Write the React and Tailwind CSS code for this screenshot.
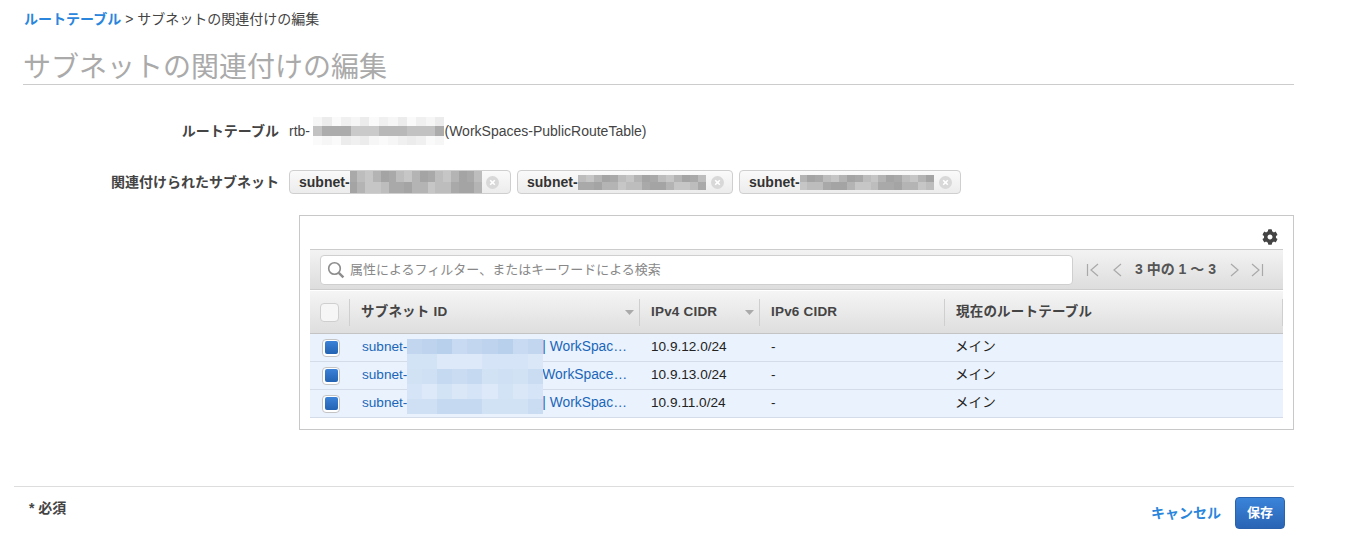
import { FaCog } from 'react-icons/fa';

const SANS = 'font-["Liberation_Sans","Noto_Sans_CJK_JP",sans-serif]';

const GRAY_DARK = ['#a9a9a9', '#b4b4b4', '#bdbdbd', '#a4a4a4', '#c6c6c6'];
const GRAY_PALE = ['#f6f6f6', '#f0f0f0', '#fafafa', '#ececec'];
const BLUE_DARK = ['#bdd3ee', '#c2d6f0', '#c7daf1', '#b9d0ec'];
const BLUE_MID = ['#c9dcf2', '#cfe0f4', '#c5d9f1', '#d2e2f5'];
const BLUE_PALE = ['#d5e4f6', '#d9e7f7', '#d3e3f6', '#dde9f8'];

// mosaic standing in for the blurred-out ids
const Pixels = ({ cols, cellW, cellH, bands, seed = 1 }) => {
  const cells = [];
  bands.forEach((palette, r) => {
    for (let c = 0; c < cols; c++) {
      const n = (c * 7 + r * 13 + seed * 5 + ((c * r + seed) % 3)) % palette.length;
      cells.push(
        <span
          key={`${r}-${c}`}
          className="block"
          style={{ width: cellW, height: cellH, background: palette[n] }}
        />
      );
    }
  });
  return (
    <span className="inline-grid shrink-0" style={{ gridTemplateColumns: `repeat(${cols}, ${cellW}px)` }}>
      {cells}
    </span>
  );
};

const ChipX = () => (
  <svg width="13" height="13" viewBox="0 0 13 13" className="shrink-0">
    <circle cx="6.5" cy="6.5" r="6.5" fill="#d8d8d8" />
    <path d="M4.2 4.2l4.6 4.6M8.8 4.2l-4.6 4.6" stroke="#fff" strokeWidth="1.6" />
  </svg>
);

const Chip = ({ width, seed, bands, cellW, cellH, blurCols, gap }) => (
  <div
    className="flex h-[24px] items-center rounded-[4px] border border-[#cfcfcf] bg-gradient-to-b from-[#fafafa] to-[#ececec] pl-[9px]"
    style={{ width }}
  >
    <span className="text-[14px] font-bold text-[#333]">subnet-</span>
    <span className="-my-2 flex items-center">
      <Pixels cols={blurCols} cellW={cellW} cellH={cellH} bands={bands} seed={seed} />
    </span>
    <span style={{ marginLeft: gap }}>
      <ChipX />
    </span>
  </div>
);

const PageIcon = ({ d }) => (
  <svg width="14" height="16" viewBox="0 0 14 16" fill="none" stroke="#a9a9a9" strokeWidth="1.2">
    <path d={d} />
  </svg>
);

const SortArrow = () => (
  <svg width="9" height="5" viewBox="0 0 9 5" className="shrink-0">
    <path d="M0 0h9L4.5 5z" fill="#aaa" />
  </svg>
);

const HeadCell = ({ children, sort, last }) => (
  <div className="flex h-[27px] items-center border-l border-[#cfcfcf] pr-[5px] pl-[11px]">
    <span className="text-[13.5px] font-bold tracking-[0.2px] text-[#444]">{children}</span>
    {sort && (
      <span className="ml-auto">
        <SortArrow />
      </span>
    )}
    {last && <span className="ml-auto h-[27px] -mr-[5px] border-r border-[#cfcfcf]" />}
  </div>
);

const COLS = 'grid grid-cols-[39px_290px_120px_185px_1fr]';

const rows = [
  { tail: '| WorkSpac…', cidr: '10.9.12.0/24' },
  { tail: 'WorkSpace…', cidr: '10.9.13.0/24' },
  { tail: '| WorkSpac…', cidr: '10.9.11.0/24' },
];

const Row = ({ tail, cidr }) => (
  <div className={`${COLS} h-[28px] items-center border-b border-[#d3dce8] bg-[#eaf2fd] text-[13.6px] text-[#222]`}>
    <div className="pl-[12px]">
      <div className="flex h-[18px] w-[18px] items-center justify-center rounded-[4px] border border-[#c4c4c4] bg-white">
        <div className="h-[13px] w-[13px] rounded-[2px] bg-gradient-to-b from-[#3b82d8] to-[#2463b3]" />
      </div>
    </div>
    <div className="flex pl-[13px] text-[#1a66b8]">
      <span>subnet-</span>
      <span className="w-[135px] shrink-0" />
      <span className="whitespace-nowrap text-[13.8px]">{tail}</span>
    </div>
    <div className="pl-[12px]">{cidr}</div>
    <div className="pl-[12px]">-</div>
    <div className="pl-[11px]">メイン</div>
  </div>
);

export default function App() {
  return (
    <div className={`${SANS} h-[548px] w-[1368px] overflow-hidden bg-white text-[#444]`}>
      {/* Breadcrumb + title */}
      <div className="ml-[23px] w-[1271px]">
        <div className="flex h-[39px] items-center pl-px text-[14px] text-[#444]">
          <span className="font-bold text-[#2a86dc]">ルートテーブル</span>
          <span className="ml-[4px]">&gt; サブネットの関連付けの編集</span>
        </div>
        <h1 className="h-[46px] border-b border-[#cccccc] text-[28px] leading-[58px] font-normal text-[#aaaaaa]">
          サブネットの関連付けの編集
        </h1>
      </div>

      {/* Form rows */}
      <div className="mt-[32px] flex h-[28px] items-center">
        <div className="w-[279px] text-right text-[14px] font-bold text-[#444]">ルートテーブル</div>
        <div className="ml-[10px] flex items-center text-[14px] text-[#444]">
          <span>rtb-</span>
          <span className="ml-[3px] flex">
            <Pixels
              cols={14}
              cellW={9.4}
              cellH={9.4}
              seed={2}
              bands={[GRAY_PALE, ['#b8b8b8', '#c2c2c2', '#acacac', '#cacaca'], GRAY_PALE]}
            />
          </span>
          <span>(WorkSpaces-PublicRouteTable)</span>
        </div>
      </div>

      <div className="mt-[25px] flex items-center">
        <div className="w-[279px] text-right text-[14px] font-bold text-[#444]">関連付けられたサブネット</div>
        <div className="ml-[10px] flex gap-[6px]">
          <Chip width={222} seed={3} blurCols={17} cellW={7.8} cellH={11} gap={4} bands={[GRAY_DARK, GRAY_DARK]} />
          <Chip width={216} seed={5} blurCols={16} cellW={8} cellH={7.5} gap={5} bands={[GRAY_DARK, GRAY_DARK]} />
          <Chip width={222} seed={7} blurCols={17} cellW={7.9} cellH={7.5} gap={5} bands={[GRAY_DARK, GRAY_DARK]} />
        </div>
      </div>

      {/* Subnet table */}
      <div className="mt-[21px] ml-[299px] h-[215px] w-[995px] border border-[#c8c8c8] px-[10px]">
        <div className="flex h-[33px] items-end justify-end pr-[5px] pb-[4px]">
          <FaCog className="text-[16px] text-[#444]" />
        </div>

        <div className="flex h-[41px] items-center border-y border-[#cccccc] bg-gradient-to-b from-[#f3f3f3] to-[#dddddd] pl-[10px]">
          <div className="flex h-[30px] w-[753px] items-center rounded-[4px] border border-[#cfcfcf] bg-white pl-[6px]">
            <svg width="18" height="18" viewBox="0 0 18 18" fill="none" stroke="#8c8c8c" className="shrink-0">
              <circle cx="7.5" cy="7.5" r="5.8" strokeWidth="1.6" />
              <path d="M11.8 11.8l4.6 4.6" strokeWidth="2.4" />
            </svg>
            <span className="ml-[5px] text-[13px] text-[#888]">属性によるフィルター、またはキーワードによる検索</span>
          </div>
          <div className="ml-[13px] flex items-center">
            <PageIcon d="M1.5 2v12M12 2L5 8l7 6" />
            <span className="ml-[10px]">
              <PageIcon d="M11 2L4 8l7 6" />
            </span>
            <span className="ml-[11px] text-[14px] font-bold text-[#555]">3 中の 1 〜 3</span>
            <span className="ml-[12px]">
              <PageIcon d="M3 2l7 6-7 6" />
            </span>
            <span className="ml-[8px]">
              <PageIcon d="M2 2l7 6-7 6M12.5 2v12" />
            </span>
          </div>
        </div>

        <div
          className={`${COLS} mt-px h-[43px] items-center border-b border-[#c4c4c4] bg-gradient-to-b from-[#f5f5f5] to-[#dedede]`}
        >
          <div className="pl-[10px]">
            <div className="h-[19px] w-[19px] rounded-[4px] border border-[#cfcfcf] bg-[#f6f6f6]" />
          </div>
          <HeadCell sort>サブネット ID</HeadCell>
          <HeadCell sort>IPv4 CIDR</HeadCell>
          <HeadCell>IPv6 CIDR</HeadCell>
          <HeadCell last>現在のルートテーブル</HeadCell>
        </div>

        <div className="relative">
          {rows.map((r) => (
            <Row key={r.cidr} {...r} />
          ))}
          {/* redaction over the subnet ids */}
          <div className="absolute top-[5px] left-[97px] flex">
            <Pixels
              cols={9}
              cellW={15.1}
              cellH={15}
              seed={4}
              bands={[BLUE_DARK, BLUE_PALE, BLUE_MID, BLUE_PALE, BLUE_MID]}
            />
          </div>
        </div>
      </div>

      {/* Footer */}
      <div className="mt-[56px] ml-[14px] flex h-[61px] w-[1280px] border-t border-[#dddddd]">
        <div className="mt-[11px] ml-[15px] text-[14px] font-bold text-[#444]">* 必須</div>
        <div className="mt-[10px] mr-[9px] ml-auto flex h-[32px] items-center">
          <span className="text-[14px] font-bold text-[#2a86dc]">キャンセル</span>
          <button className="ml-[14px] h-[32px] w-[50px] rounded-[4px] border border-[#2a62ad] bg-gradient-to-b from-[#3a84da] to-[#2a64b4] text-[13px] font-bold text-white">
            保存
          </button>
        </div>
      </div>
    </div>
  );
}
